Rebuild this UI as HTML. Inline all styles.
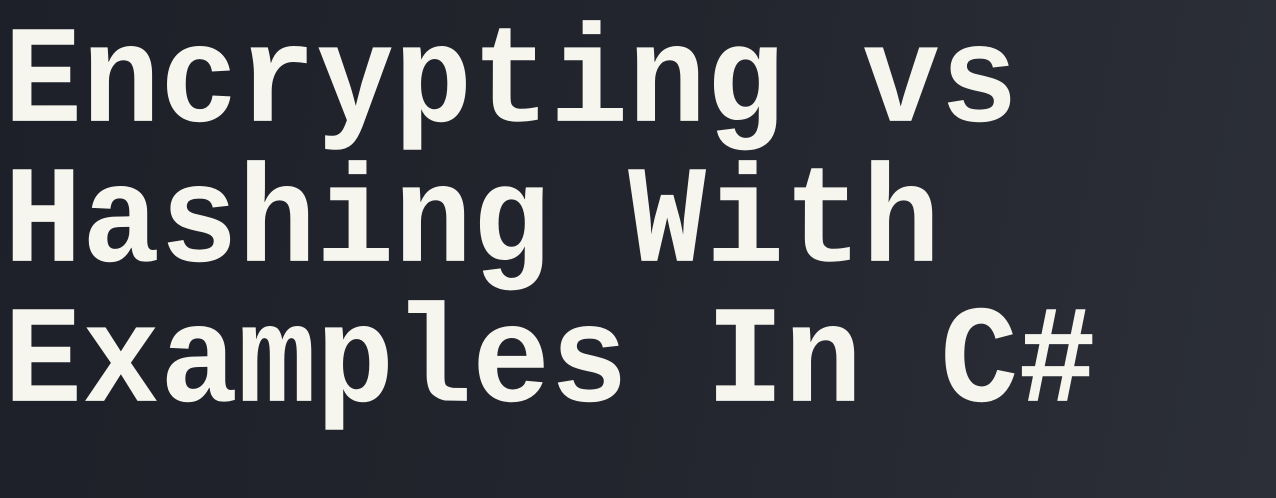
<!DOCTYPE html>
<html><head><meta charset="utf-8"><style>
html,body{margin:0;padding:0;}
body{width:1276px;height:498px;overflow:hidden;background:linear-gradient(100deg,#1e2029 0%,#23252e 50%,#2c2f38 100%);}
.t{position:absolute;left:4px;font-family:"Liberation Mono","DejaVu Sans Mono",monospace;font-weight:bold;font-size:130px;line-height:140px;color:#f6f6ef;white-space:pre;transform-origin:0 105px;transform:translateY(-2px) scaleY(1.07);}
</style></head><body>
<div class="t" style="top:20px">Encrypting vs</div>
<div class="t" style="top:160px">Hashing With</div>
<div class="t" style="top:300px">Examples In C#</div>
</body></html>
